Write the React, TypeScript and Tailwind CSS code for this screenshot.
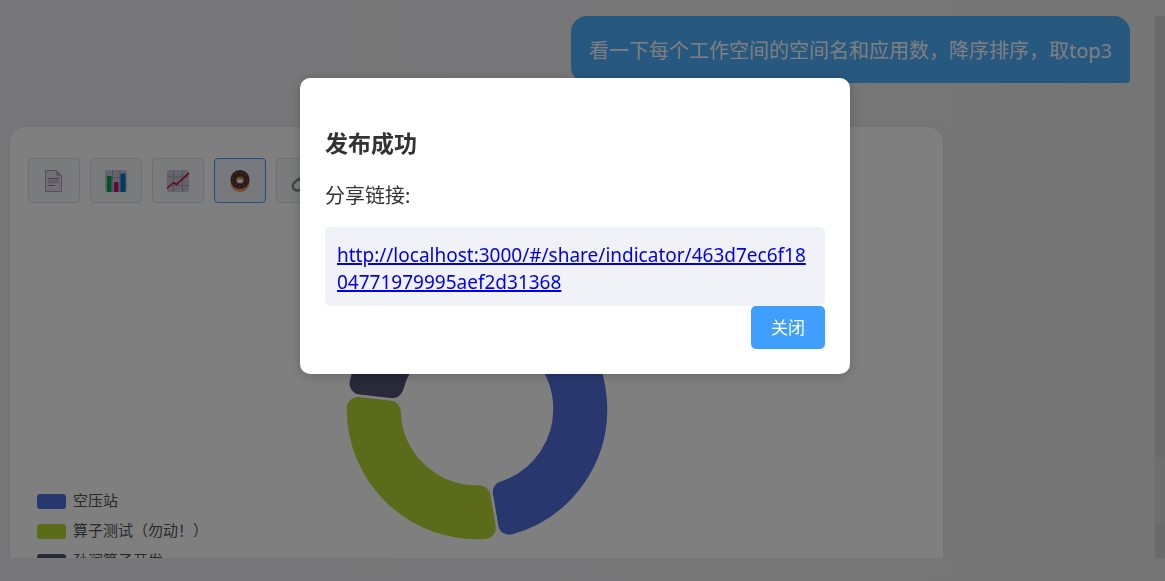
import type { ReactNode } from "react";

const SHARE_URL =
  "http://localhost:3000/#/share/indicator/463d7ec6f1804771979995aef2d31368";

const DocumentIcon = () => (
  <svg viewBox="0 0 24 24" className="size-6">
    <path d="M3.500 1.500h11l5 5v16h-16z" fill="#e4dcea" stroke="#a9a1ad" strokeWidth="1" />
    <path d="M14.500 1l5.500 5.500h-5.500z" fill="#aaa2b0" />
    <path d="M6 9.500h11M6 16.500h7" stroke="#8b8297" strokeWidth="1" />
    <path d="M6 11.500h11M6 13.500h11" stroke="#bbb3c3" strokeWidth="1.400" />
  </svg>
);

const BarsIcon = () => (
  <svg viewBox="0 0 24 24" className="size-6">
    <rect x="1" y="1" width="22" height="22" rx="2" fill="#cfc6da" />
    <path d="M8.500 1v22M16 1v22M1 8.500h22M1 16.500h22" stroke="#a79fb0" strokeWidth="1" />
    <path d="M3 7h4.500v16H3z" fill="#00a651" />
    <path d="M10 13h4.500v10H10z" fill="#c4117c" />
    <path d="M16.500 4.500h5V23h-5z" fill="#0079c4" />
  </svg>
);

const TrendIcon = () => (
  <svg viewBox="0 0 24 24" className="size-6">
    <rect x="1" y="1" width="22" height="22" rx="2" fill="#cfc6da" />
    <path d="M7.500 1v22M16.500 1v22M1 8h22M1 16.500h22" stroke="#a79fb0" strokeWidth="1" />
    <path d="M1 19.500l6.500-6 3 2L23 4" fill="none" stroke="#d01a4c" strokeWidth="1.700" />
  </svg>
);

const DonutIcon = () => (
  <svg viewBox="0 0 24 24" className="size-6">
    <ellipse cx="12" cy="13.500" rx="9.500" ry="9.500" fill="#e09a4c" />
    <circle cx="12" cy="10.500" r="9.500" fill="#59342a" />
    <ellipse cx="12" cy="11" rx="4" ry="3.500" fill="#c98a4c" />
    <ellipse cx="12" cy="12" rx="3" ry="2" fill="#ecf5ff" />
    <g fill="#e02f7b">
      <circle cx="8" cy="4.500" r=".8" />
      <circle cx="17" cy="6" r=".8" />
      <circle cx="5" cy="13" r=".8" />
      <circle cx="11" cy="17.500" r=".8" />
      <circle cx="19" cy="12" r=".8" />
    </g>
    <g fill="#2b9ac9">
      <circle cx="13" cy="4" r=".7" />
      <circle cx="4.500" cy="9" r=".8" />
      <circle cx="16" cy="16" r=".7" />
      <circle cx="8" cy="15.500" r=".7" />
    </g>
  </svg>
);

const LinkIcon = () => (
  <svg viewBox="0 0 24 24" className="size-6" fill="none" stroke="#858585" strokeWidth="2.500">
    <rect x="2" y="11" width="14" height="9" rx="4.500" transform="rotate(-38 9 15)" />
    <rect x="10" y="5" width="13" height="8" rx="4" transform="rotate(-38 16 9)" />
  </svg>
);

const views: { label: string; icon: ReactNode; active?: boolean }[] = [
  { label: "表格", icon: <DocumentIcon /> },
  { label: "柱状图", icon: <BarsIcon /> },
  { label: "折线图", icon: <TrendIcon /> },
  { label: "环形图", icon: <DonutIcon />, active: true },
  { label: "分享", icon: <LinkIcon /> },
];

// angles are in degrees, clockwise from twelve o'clock
const series = [
  { name: "空压站", color: "#5070dd", from: 0, to: 170.3 },
  { name: "算子测试（勿动！）", color: "#b6d634", from: 170.3, to: 276.4 },
  { name: "孙润算子开发", color: "#505372", from: 276.4, to: 360 },
];

const OUTER = 131.5;
const INNER = 75;
const CORNER = 12.5;

const point = (radius: number, angle: number) =>
  `${radius * Math.sin(angle)} ${-radius * Math.cos(angle)}`;

const ringSegment = (from: number, to: number) => {
  const a = (from * Math.PI) / 180;
  const b = (to * Math.PI) / 180;
  const outerTurn = Math.asin(CORNER / (OUTER - CORNER));
  const innerTurn = Math.asin(CORNER / (INNER + CORNER));
  const outerEdge = Math.sqrt((OUTER - CORNER) ** 2 - CORNER ** 2);
  const innerEdge = Math.sqrt((INNER + CORNER) ** 2 - CORNER ** 2);
  const corner = `A${CORNER} ${CORNER} 0 0 1`;
  return [
    `M${point(OUTER, a + outerTurn)}`,
    `A${OUTER} ${OUTER} 0 0 1 ${point(OUTER, b - outerTurn)}`,
    `${corner} ${point(outerEdge, b)}`,
    `L${point(innerEdge, b)}`,
    `${corner} ${point(INNER, b - innerTurn)}`,
    `A${INNER} ${INNER} 0 0 0 ${point(INNER, a + innerTurn)}`,
    `${corner} ${point(innerEdge, a)}`,
    `L${point(outerEdge, a)}`,
    `${corner} ${point(OUTER, a + outerTurn)}Z`,
  ].join(" ");
};

const ChartCard = () => {
  return (
    <section className="mt-11 w-5/6 rounded-2xl bg-white px-[18px] pt-[31px] pb-10 shadow-[0_2px_12px_rgba(0,0,0,0.05)]">
      <div className="flex gap-[10px]">
        {views.map((view) => (
          <button
            key={view.label}
            type="button"
            aria-label={view.label}
            className={
              view.active
                ? "flex h-[45px] w-[52px] items-center justify-center rounded border border-[#409eff] bg-[#ecf5ff]"
                : "flex h-[45px] w-[52px] items-center justify-center rounded border border-[#dcdfe6] bg-[#f5f7fa]"
            }
          >
            {view.icon}
          </button>
        ))}
      </div>
      <div className="mt-[74px] grid grid-cols-[1fr_auto_1fr]">
        <ul className="mt-[209px] pl-[9px]">
          {series.map((item) => (
            <li
              key={item.name}
              className="flex h-[30px] items-center gap-[7px] text-[15px] whitespace-nowrap text-[#54555a]"
            >
              <span
                className="h-[15px] w-[29px] rounded-[3px]"
                style={{ backgroundColor: item.color }}
              />
              <span className="pb-[2px]">{item.name}</span>
            </li>
          ))}
        </ul>
        <svg viewBox="-132 -132 264 264" className="size-[264px]">
          {series.map((item) => (
            <path
              key={item.name}
              d={ringSegment(item.from, item.to)}
              fill={item.color}
              stroke="#ffffff"
              strokeWidth="2.500"
            />
          ))}
        </svg>
      </div>
    </section>
  );
};

const PublishDialog = () => {
  return (
    <div className="fixed inset-0 flex items-start justify-center bg-black/50 pt-[78px] pr-[15px]">
      <div
        role="dialog"
        aria-labelledby="publish-title"
        className="w-[550px] rounded-[10px] bg-white p-[25px] text-[#333333] shadow-[0_2px_12px_rgba(0,0,0,0.2)]"
      >
        <h3 id="publish-title" className="mt-6 text-[23px] leading-8 font-bold">
          发布成功
        </h3>
        <p className="mt-[23px] text-xl leading-7">分享链接:</p>
        <div className="mt-[17px] rounded-[5px] bg-[#f0f2f7] px-3 pt-[15px] pb-[10px] text-[19px] leading-[27px] break-all">
          <a href={SHARE_URL} className="text-[#0000ee] underline decoration-2">
            {SHARE_URL}
          </a>
        </div>
        <div className="flex justify-end">
          <button
            type="button"
            className="h-[43px] rounded-[5px] bg-[#409eff] px-5 text-[17px] text-white"
          >
            关闭
          </button>
        </div>
      </div>
    </div>
  );
};

const App = () => {
  return (
    <div className="flex h-screen flex-col bg-linear-to-r from-[#efeff4] to-[#ebebeb] pt-4 pb-[23px] font-['Noto_Sans','Noto_Sans_CJK_SC',sans-serif]">
      <div className="flex min-h-0 flex-1">
        <main className="min-w-0 flex-1 overflow-hidden pr-[25px] pl-[10px]">
          <div className="flex justify-end">
            <p className="rounded-2xl rounded-br-sm bg-[#4eb0ff] px-[18px] pt-5 pb-[18px] text-xl leading-[29px] text-white">
              看一下每个工作空间的空间名和应用数，降序排序，取top3
            </p>
          </div>
          <ChartCard />
        </main>
        <div className="flex w-[10px] flex-col bg-[#d4d4d4]">
          <div className="mt-[441px] h-[68px] rounded-full bg-[#dcdcdc]" />
        </div>
      </div>
      <PublishDialog />
    </div>
  );
};

export default App;
